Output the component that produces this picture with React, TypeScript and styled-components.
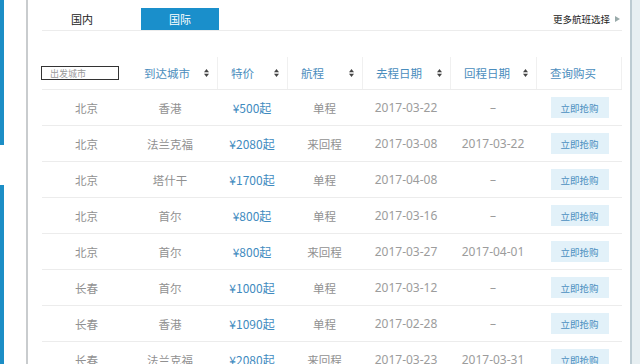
import React from 'react';
import styled, { createGlobalStyle } from 'styled-components';

const GlobalStyle = createGlobalStyle`
  html, body {
    margin: 0;
    padding: 0;
    background: #ffffff;
    font-family: "Noto Sans CJK SC", "Noto Sans", sans-serif;
  }
`;

interface Flight {
  from: string;
  to: string;
  price: string;
  trip: string;
  go: string;
  back: string;
}

const flights: Flight[] = [
  { from: '北京', to: '香港', price: '500', trip: '单程', go: '2017-03-22', back: '–' },
  { from: '北京', to: '法兰克福', price: '2080', trip: '来回程', go: '2017-03-08', back: '2017-03-22' },
  { from: '北京', to: '塔什干', price: '1700', trip: '单程', go: '2017-04-08', back: '–' },
  { from: '北京', to: '首尔', price: '800', trip: '单程', go: '2017-03-16', back: '–' },
  { from: '北京', to: '首尔', price: '800', trip: '来回程', go: '2017-03-27', back: '2017-04-01' },
  { from: '长春', to: '首尔', price: '1000', trip: '单程', go: '2017-03-12', back: '–' },
  { from: '长春', to: '香港', price: '1090', trip: '单程', go: '2017-02-28', back: '–' },
  { from: '长春', to: '法兰克福', price: '2080', trip: '来回程', go: '2017-03-23', back: '2017-03-31' },
];

const COLS = '89px 86px 70px 75px 88px 86px 86px';

const SortIcon: React.FC = () => (
  <svg width="5" height="8" viewBox="0 0 5 8">
    <path d="M2.5 0 L5 3.2 L0 3.2 Z" fill="#444" />
    <path d="M2.5 8 L5 4.8 L0 4.8 Z" fill="#444" />
  </svg>
);

const App: React.FC = () => {
  return (
    <>
      <GlobalStyle />
      <Page>
        <LeftRail>
          <BlueStrip $h={145} />
          <Gap />
          <BlueStrip $h={200} />
        </LeftRail>
        <Main>
          <TabBar>
            <Tab>国内</Tab>
            <Tab $active>国际</Tab>
            <MoreLink>
              更多航班选择
              <svg width="5" height="6" viewBox="0 0 5 6">
                <path d="M0 0 L5 3 L0 6 Z" fill="#9aa" />
              </svg>
            </MoreLink>
          </TabBar>
          <Table>
            <HeadRow>
              <HeadCell $first>
                <CityInput placeholder="出发城市" />
              </HeadCell>
              <HeadCell>到达城市<SortIcon /></HeadCell>
              <HeadCell $line>特价<SortIcon /></HeadCell>
              <HeadCell $line>航程<SortIcon /></HeadCell>
              <HeadCell $line>去程日期<SortIcon /></HeadCell>
              <HeadCell $line>回程日期<SortIcon /></HeadCell>
              <HeadCell $line $last>查询购买</HeadCell>
            </HeadRow>
            {flights.map((f, i) => (
              <Row key={i}>
                <Cell>{f.from}</Cell>
                <Cell $shift>{f.to}</Cell>
                <Price>¥{f.price}起</Price>
                <Cell>{f.trip}</Cell>
                <DateCell>{f.go}</DateCell>
                <DateCell>{f.back}</DateCell>
                <Cell>
                  <BuyButton>立即抢购</BuyButton>
                </Cell>
              </Row>
            ))}
          </Table>
        </Main>
        <RightRail />
      </Page>
    </>
  );
};

const Page = styled.div`
  display: flex;
  width: 640px;
  height: 364px;
  overflow: hidden;
`;

const LeftRail = styled.div`
  width: 26px;
  flex-shrink: 0;
  display: flex;
  flex-direction: column;
  border-right: 2px solid #c9ccce;
`;

const BlueStrip = styled.div<{ $h: number }>`
  width: 4px;
  height: ${(p) => p.$h}px;
  background: #1c8ec6;
  flex-shrink: 0;
`;

const Gap = styled.div`
  height: 40px;
  flex-shrink: 0;
`;

const Main = styled.div`
  flex: 1;
  padding: 0 8px 0 14px;
  display: flex;
  flex-direction: column;
`;

const TabBar = styled.div`
  display: flex;
  align-items: flex-end;
  padding-top: 8px;
  height: 22px;
  border-bottom: 1px solid #ececec;
  padding-left: 1px;
`;

const Tab = styled.div<{ $active?: boolean }>`
  width: 78px;
  height: 22px;
  margin-right: 20px;
  display: flex;
  align-items: center;
  justify-content: center;
  font-size: 11px;
  color: ${(p) => (p.$active ? '#ffffff' : '#222')};
  background: ${(p) => (p.$active ? '#1a8fcb' : 'transparent')};
`;

const MoreLink = styled.div`
  margin-left: auto;
  height: 22px;
  display: flex;
  align-items: center;
  gap: 5px;
  font-size: 9.5px;
  color: #222;
  padding-right: 2px;
`;

const Table = styled.div`
  margin-top: 26px;
  display: flex;
  flex-direction: column;
`;

const HeadRow = styled.div`
  display: grid;
  grid-template-columns: ${COLS};
  height: 32px;
  border-bottom: 1px solid #ececec;
`;

const HeadCell = styled.div<{ $first?: boolean; $line?: boolean; $last?: boolean }>`
  display: flex;
  align-items: center;
  justify-content: space-between;
  padding: ${(p) => (p.$first ? '0' : '0 8px 0 13px')};
  font-size: 11.5px;
  color: #4a8dbd;
  border-left: ${(p) => (p.$line ? '1px solid #f0f0f0' : 'none')};
  border-right: ${(p) => (p.$last ? '1px solid #f0f0f0' : 'none')};
`;

const CityInput = styled.input`
  box-sizing: border-box;
  width: 78px;
  height: 14px;
  margin-left: -1px;
  border: 1px solid #333;
  padding: 0 0 0 8px;
  font-family: inherit;
  font-size: 9px;
  outline: none;
  &::placeholder {
    color: #9a9a9a;
  }
`;

const Row = styled.div`
  display: grid;
  grid-template-columns: ${COLS};
  height: 35px;
  border-bottom: 1px solid #ececec;
`;

const Cell = styled.div<{ $shift?: boolean }>`
  display: flex;
  align-items: center;
  justify-content: center;
  font-size: 11.5px;
  color: #919191;
  padding-right: ${(p) => (p.$shift ? '8px' : '0')};
`;

const Price = styled(Cell)`
  color: #3f8bc0;
  font-weight: 400;
  font-size: 12px;
`;

const DateCell = styled(Cell)`
  font-family: "Noto Sans", sans-serif;
  font-size: 12px;
  color: #9c9c9c;
`;

const BuyButton = styled.div`
  width: 58px;
  height: 21px;
  margin-left: 1px;
  display: flex;
  align-items: center;
  justify-content: center;
  background: #e2f1f9;
  color: #4b8fc0;
  font-size: 9.5px;
`;

const RightRail = styled.div`
  width: 8px;
  flex-shrink: 0;
  border-left: 2px solid #bccbd2;
  background: #e7eff2;
`;

export default App;
